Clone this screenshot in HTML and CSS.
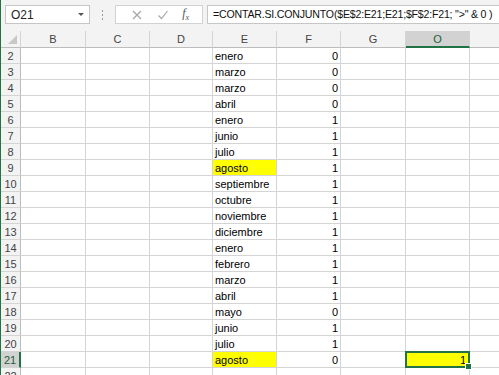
FILE: index.html
```html
<!DOCTYPE html>
<html lang="es">
<head>
    <meta charset="UTF-8">
    <title>Excel - CONTAR.SI.CONJUNTO</title>
    <link rel="stylesheet" href="styles.css">
</head>
<body>
    <div class="app">
        <div class="toolbar">
            <div class="namebox">
                <span>O21</span>
                <span class="caret"></span>
            </div>
            <div class="grip"><i></i><i></i><i></i></div>
            <div class="fbuttons">
                <svg class="ico" width="12" height="12" viewBox="0 0 12 12"><path d="M2 2L10 10M10 2L2 10" stroke="#a6a6a6" stroke-width="1.2" fill="none"/></svg>
                <svg class="ico" width="12" height="12" viewBox="0 0 12 12"><path d="M1.5 6.5L4.5 9.5L10.5 2" stroke="#a6a6a6" stroke-width="1.2" fill="none"/></svg>
                <span class="fx">f<sub>x</sub></span>
            </div>
            <div class="formula">=CONTAR.SI.CONJUNTO($E$2:E21;E21;$F$2:F21; "&gt;" &amp; 0 )</div>
        </div>

        <div class="sheet" id="sheet">
            <div class="hd corner"><span class="tri"></span></div>
            <div class="hd">B</div>
            <div class="hd">C</div>
            <div class="hd">D</div>
            <div class="hd">E</div>
            <div class="hd">F</div>
            <div class="hd">G</div>
            <div class="hd sel-col">O</div>
            <div class="hd last"></div>
        </div>
    </div>

    <script>
        // Datos de las columnas E y F
        const rows = [
            ['enero', 0], ['marzo', 0], ['marzo', 0], ['abril', 0], ['enero', 1],
            ['junio', 1], ['julio', 1], ['agosto', 1], ['septiembre', 1], ['octubre', 1],
            ['noviembre', 1], ['diciembre', 1], ['enero', 1], ['febrero', 1], ['marzo', 1],
            ['abril', 1], ['mayo', 0], ['junio', 1], ['julio', 1], ['agosto', 0], ['', '']
        ];
        const sheet = document.getElementById('sheet');

        rows.forEach((r, i) => {
            const n = i + 2;
            const html = [];
            html.push(`<div class="rh${n === 21 ? ' sel-row' : ''}">${n}</div>`);
            html.push('<div class="c"></div><div class="c"></div><div class="c"></div>');
            html.push(`<div class="c${r[0] === 'agosto' ? ' fill' : ''}">${r[0]}</div>`);
            html.push(`<div class="c num">${r[1]}</div>`);
            html.push('<div class="c"></div>');
            if (n === 21) {
                html.push('<div class="c num fill active">1<span class="handle"></span></div>');
            } else {
                html.push('<div class="c"></div>');
            }
            html.push('<div class="c last"></div>');
            sheet.insertAdjacentHTML('beforeend', html.join(''));
        });
    </script>
</body>
</html>
```

FILE: styles.css
```css
html, body {
    margin: 0;
    padding: 0;
    background: #ffffff;
    overflow: hidden;
}
body {
    font-family: 'Liberation Sans', Arial, sans-serif;
    color: #000;
}
.app {
    width: 499px;
    height: 375px;
    border-left: 1px solid #217346;
    box-sizing: border-box;
    overflow: hidden;
}
.toolbar {
    height: 31px;
    background: #f3f3f3;
    display: flex;
    align-items: flex-start;
    padding-top: 5px;
    box-sizing: border-box;
}
.namebox {
    margin-left: 4px;
    width: 85px;
    height: 19px;
    background: #fff;
    border: 1px solid #c6c6c6;
    box-sizing: border-box;
    display: flex;
    align-items: center;
    justify-content: space-between;
    padding: 0 5px 0 5px;
    font-size: 12px;
    color: #222;
}
.caret {
    width: 0;
    height: 0;
    border-left: 3px solid transparent;
    border-right: 3px solid transparent;
    border-top: 3px solid #555;
}
.grip {
    width: 25px;
    height: 19px;
    display: flex;
    flex-direction: column;
    align-items: center;
    justify-content: center;
    gap: 2px;
}
.grip i {
    width: 1px;
    height: 2px;
    background: #9a9a9a;
}
.fbuttons {
    width: 88px;
    height: 19px;
    background: #fff;
    border: 1px solid #d2d2d2;
    box-sizing: border-box;
    display: flex;
    align-items: center;
    justify-content: space-around;
    padding: 0 6px 0 8px;
}
.fx {
    font-family: 'Liberation Serif', serif;
    font-style: italic;
    font-size: 12px;
    color: #555;
}
.fx sub {
    font-size: 8px;
}
.formula {
    flex: 1;
    margin-left: 4px;
    height: 19px;
    background: #fff;
    border: 1px solid #c6c6c6;
    border-right: none;
    box-sizing: border-box;
    font-size: 10.6px;
    letter-spacing: -0.2px;
    line-height: 17px;
    padding-left: 5px;
    white-space: nowrap;
    overflow: hidden;
    color: #111;
}
.sheet {
    display: grid;
    grid-template-columns: 20px 65px 64px 63px 64px 64px 65px 64px 1fr;
    grid-template-rows: 17px;
    grid-auto-rows: 16px;
    font-size: 11px;
}
.hd {
    background: #f3f3f3;
    border-right: 1px solid #d4d4d4;
    border-bottom: 1px solid #bdbdbd;
    box-sizing: border-box;
    text-align: center;
    line-height: 16px;
    color: #444;
    font-size: 11px;
}
.hd.corner {
    position: relative;
}
.tri {
    position: absolute;
    right: 3px;
    bottom: 3px;
    width: 0;
    height: 0;
    border-left: 9px solid transparent;
    border-bottom: 9px solid #c8c8c8;
}
.hd.sel-col {
    background: #d2d2d2;
    border-bottom: 2px solid #217346;
    color: #1f5d3a;
}
.hd.last {
    border-right: none;
}
.rh {
    background: #f3f3f3;
    border-right: 1px solid #bdbdbd;
    border-bottom: 1px solid #d4d4d4;
    box-sizing: border-box;
    text-align: center;
    line-height: 17px;
    color: #444;
    font-size: 11px;
}
.rh.sel-row {
    background: #d2d2d2;
    border-right: 2px solid #217346;
    color: #1f5d3a;
}
.c {
    border-right: 1px solid #d4d4d4;
    border-bottom: 1px solid #d4d4d4;
    box-sizing: border-box;
    line-height: 17px;
    padding: 0 2px;
    white-space: nowrap;
    overflow: hidden;
}
.c.last {
    border-right: none;
}
.num {
    text-align: right;
}
.fill {
    background: #ffff00;
}
.c.active {
    position: relative;
    overflow: visible;
    border: 2px solid #217346;
    line-height: 14px;
    margin: -1px 0 0 -1px;
    width: calc(100% + 1px);
    height: 17px;
}
.handle {
    position: absolute;
    right: -4px;
    bottom: -4px;
    width: 5px;
    height: 5px;
    background: #217346;
    border: 1px solid #fff;
}
```
